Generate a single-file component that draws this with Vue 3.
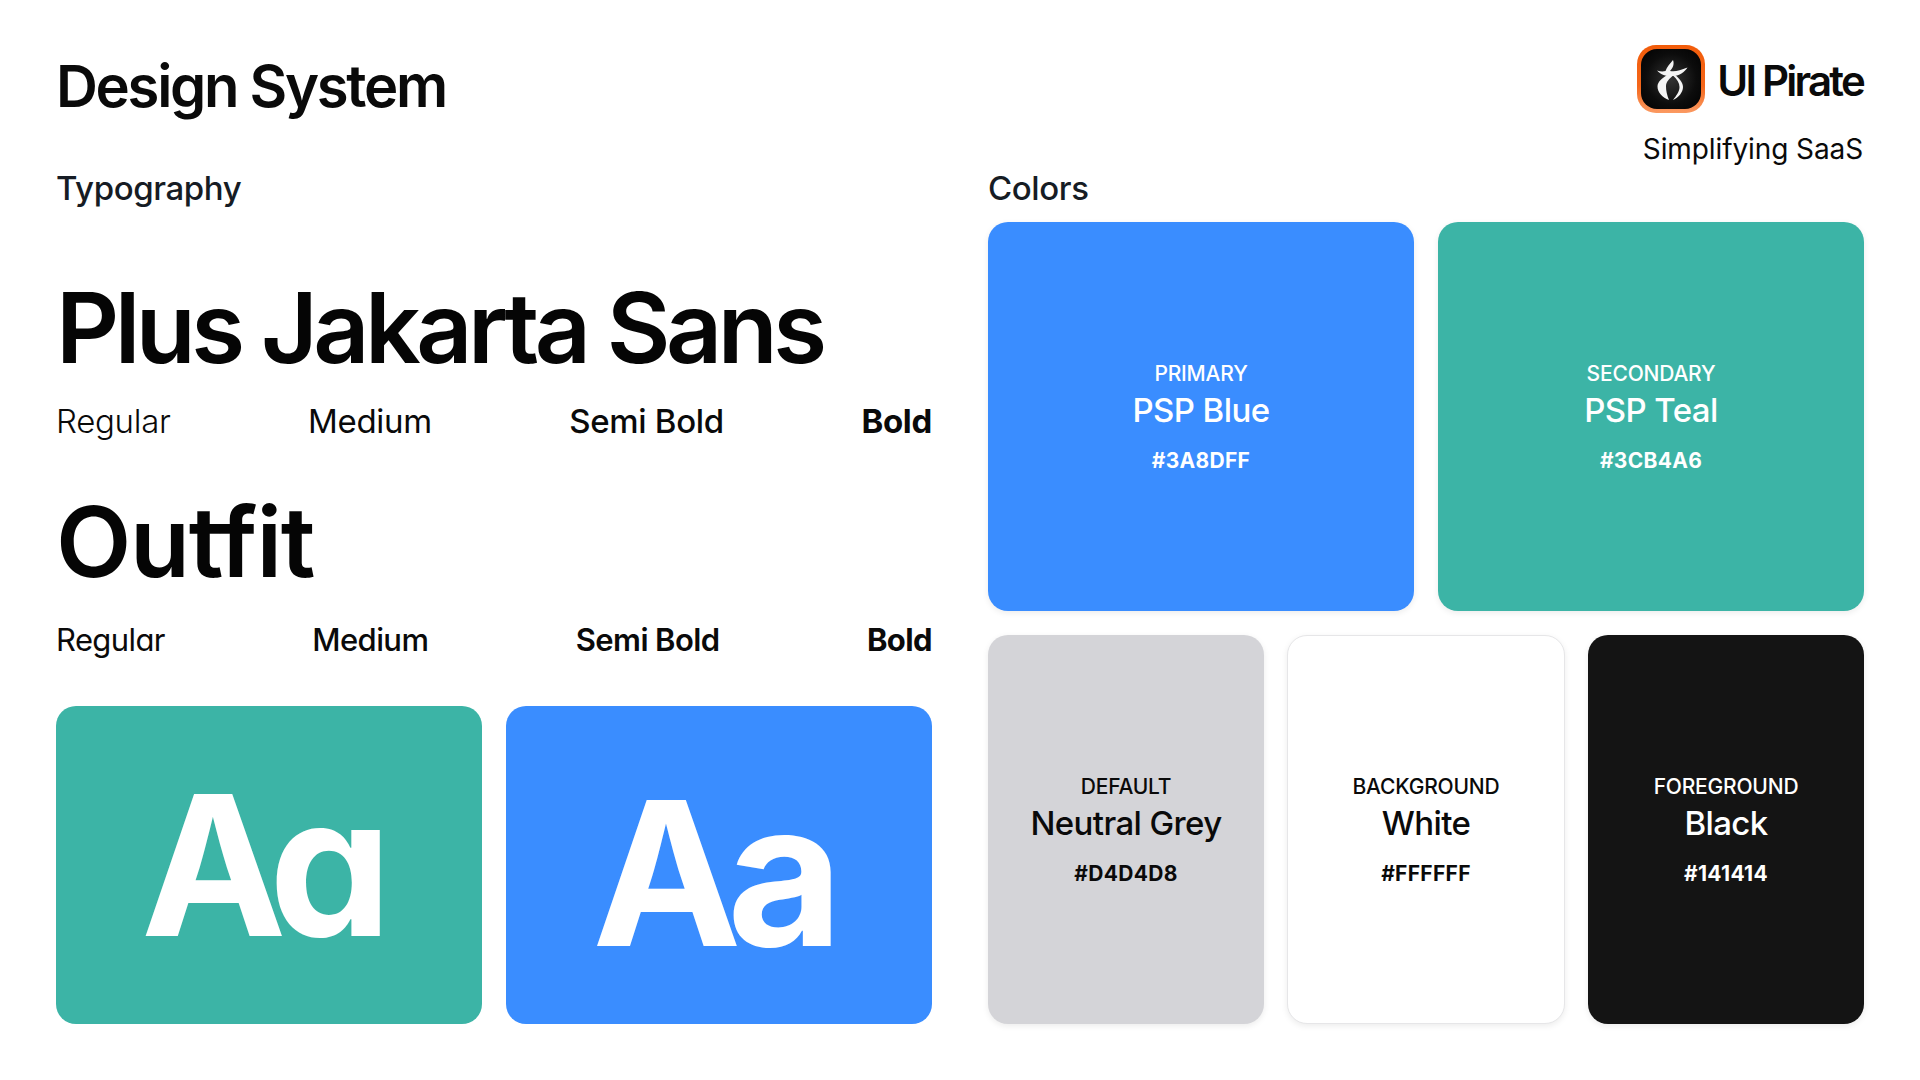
<script setup>
const weights = [
  { label: 'Regular', cls: 'w400' },
  { label: 'Medium', cls: 'w500' },
  { label: 'Semi Bold', cls: 'w600' },
  { label: 'Bold', cls: 'w700' },
]
const top = [
  { kicker: 'PRIMARY', name: 'PSP Blue', hex: '#3A8DFF', cls: 'blue' },
  { kicker: 'SECONDARY', name: 'PSP Teal', hex: '#3CB4A6', cls: 'teal' },
]
const bottom = [
  { kicker: 'DEFAULT', name: 'Neutral Grey', hex: '#D4D4D8', cls: 'grey' },
  { kicker: 'BACKGROUND', name: 'White', hex: '#FFFFFF', cls: 'white' },
  { kicker: 'FOREGROUND', name: 'Black', hex: '#141414', cls: 'black' },
]
</script>

<template>
  <div class="page">
    <header class="head">
      <h1 class="title">Design System</h1>
      <div class="brand">
        <div class="brand-row">
          <svg class="logo" viewBox="0 0 68 68" width="68" height="68" aria-label="UI Pirate logo">
            <defs>
              <linearGradient id="rim" x1="0" y1="0" x2="0" y2="1">
                <stop offset="0" stop-color="#f25c0a" />
                <stop offset="0.6" stop-color="#f4661a" />
                <stop offset="1" stop-color="#fb9a62" />
              </linearGradient>
              <radialGradient id="core" cx="0.5" cy="0.5" r="0.6">
                <stop offset="0" stop-color="#333" />
                <stop offset="0.7" stop-color="#0c0c0c" />
                <stop offset="1" stop-color="#050505" />
              </radialGradient>
            </defs>
            <rect width="68" height="68" rx="19" fill="url(#rim)" />
            <rect x="4" y="4" width="60" height="60" rx="16" fill="url(#core)" />
            <path fill="#f4f4f4" d="M36 15C37.500 19 36 23 33 26C38 27 43 25.500 50.500 22.500C47.500 27.500 42 30.500 37 31C31 31.500 25 31 20 25.500C23 26.500 26 26.800 28.500 26C30 22 33 18.500 36 15Z" />
            <path fill="#f4f4f4" d="M32 29C25 33 20.500 37 20.500 41.500C20.500 47.500 25.500 52.500 32 55C30 50 29 46 29 41.500C29 37 32 33.500 37 30Z" />
            <path fill="#f4f4f4" d="M38 30C42.500 33.500 46 37.500 46 42C46 47.500 41.500 52.500 36 55C39.500 50.500 42.500 46.500 42.500 42C42.500 38 40 34 36.500 31Z" />
          </svg>
          <span class="brand-name">UI Pirate</span>
        </div>
        <div class="tagline">Simplifying SaaS</div>
      </div>
    </header>

    <main class="columns">
      <section class="col">
        <h2 class="label">Typography</h2>
        <div class="font-name jakarta">Plus Jakarta Sans</div>
        <div class="weights jakarta-row">
          <span v-for="w in weights" :key="w.label" :class="w.cls">{{ w.label }}</span>
        </div>
        <div class="font-name outfit">Outfit</div>
        <div class="weights outfit-row">
          <span v-for="w in weights" :key="w.label" :class="w.cls">{{ w.label }}</span>
        </div>
        <div class="aa-row">
          <div class="aa aa-teal"><span>Aa</span></div>
          <div class="aa aa-blue"><span>Aa</span></div>
        </div>
      </section>

      <section class="col">
        <h2 class="label">Colors</h2>
        <div class="swatches two">
          <div v-for="c in top" :key="c.name" class="swatch" :class="c.cls">
            <div class="kicker">{{ c.kicker }}</div>
            <div class="name">{{ c.name }}</div>
            <div class="hex">{{ c.hex }}</div>
          </div>
        </div>
        <div class="swatches three">
          <div v-for="c in bottom" :key="c.name" class="swatch" :class="c.cls">
            <div class="kicker">{{ c.kicker }}</div>
            <div class="name">{{ c.name }}</div>
            <div class="hex">{{ c.hex }}</div>
          </div>
        </div>
      </section>
    </main>
  </div>
</template>

<style>
html, body { margin: 0; background: #fff; }
</style>

<style scoped>
.page {
  width: 1920px;
  height: 1080px;
  box-sizing: border-box;
  padding: 45px 56px 0;
  font-family: Inter, "Liberation Sans", sans-serif;
  color: #0a0a0a;
  background: #fff;
  overflow: hidden;
}
.head {
  display: flex;
  justify-content: space-between;
  align-items: flex-start;
  height: 115px;
}
.title {
  margin: 0;
  font-size: 58px;
  line-height: 82px;
  font-weight: 640;
  letter-spacing: -2.300px;
}
.brand { display: flex; flex-direction: column; align-items: flex-end; margin-right: 1px; }
.brand-row { display: flex; align-items: center; gap: 12px; }
.logo { display: block; }
.brand-name { padding-top: 3px; font-size: 42px; font-weight: 600; letter-spacing: -2.800px; }
.tagline { margin-top: 19px; font-size: 28px; line-height: 34px; letter-spacing: -0.1px; }

.columns {
  display: grid;
  grid-template-columns: 876px 876px;
  justify-content: space-between;
}
.col { display: flex; flex-direction: column; }
.label {
  margin: 0 0 5px;
  font-size: 33px;
  line-height: 57px;
  font-weight: 500;
  letter-spacing: -0.4px;
  color: #161c24;
}
.font-name { line-height: 120px; font-size: 98px; font-weight: 640; color: #050505; }
.jakarta { margin-top: 46px; letter-spacing: -4.500px; }
.outfit { margin-top: 40px; letter-spacing: -1.300px; font-feature-settings: "cv11"; }
.weights {
  display: flex;
  justify-content: space-between;
  font-size: 33px;
  line-height: 42px;
  color: #0a0a0a;
}
.jakarta-row { margin-top: 12px; letter-spacing: -0.3px; }
.outfit-row { margin-top: 17px; font-size: 31px; letter-spacing: -0.6px; font-feature-settings: "cv11"; }
.w400 { font-weight: 400; }
.w500 { font-weight: 500; }
.w600 { font-weight: 600; }
.w700 { font-weight: 700; }
.jakarta-row .w400 { font-weight: 350; }
.jakarta-row .w500 { font-weight: 420; }
.jakarta-row .w600 { font-weight: 540; }

.aa-row {
  margin-top: 45px;
  display: grid;
  grid-template-columns: 426px 426px;
  justify-content: space-between;
}
.aa {
  height: 318px;
  box-sizing: border-box;
  border-radius: 20px;
  display: flex;
  align-items: center;
  justify-content: center;
  color: #fff;
  font-weight: 700;
}
.aa-teal {
  background: #3cb4a6;
  font-size: 195px;
  letter-spacing: -13px;
  padding-right: 18px;
  font-feature-settings: "cv11";
}
.aa-blue {
  background: #3a8dff;
  font-size: 200px;
  letter-spacing: -14.500px;
  padding: 16px 17px 0 0;
}

.swatches { display: grid; }
.two { grid-template-columns: 426px 426px; justify-content: space-between; margin-bottom: 24px; }
.three { grid-template-columns: 276px 278px 276px; justify-content: space-between; }
.swatch {
  height: 389px;
  box-sizing: border-box;
  border-radius: 20px;
  display: flex;
  flex-direction: column;
  align-items: center;
  justify-content: center;
  box-shadow: 0 2px 6px rgba(0, 0, 0, 0.08);
}
.kicker { font-size: 21px; line-height: 29px; font-weight: 500; letter-spacing: -0.2px; }
.name { font-size: 33px; line-height: 44px; font-weight: 500; letter-spacing: -0.6px; }
.hex { margin-top: 15px; font-size: 21px; line-height: 28px; font-weight: 700; letter-spacing: 0.3px; }
.blue { background: #3a8dff; color: #fff; }
.teal { background: #3cb4a6; color: #fff; }
.grey { background: #d4d4d8; color: #0a0a0a; }
.white { background: #fff; color: #0a0a0a; border: 1px solid #e6e6e8; }
.black { background: #141414; color: #fff; }
</style>
